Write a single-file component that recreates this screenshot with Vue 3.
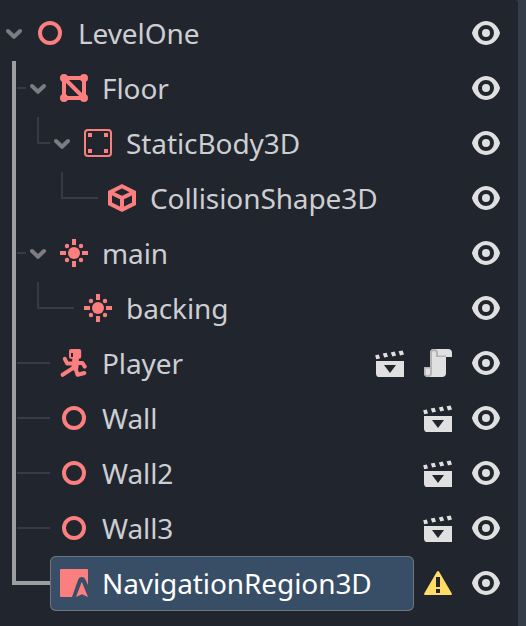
<script setup>
const rows = [
  { name: 'LevelOne', icon: 'node', gutter: 2, open: true, tools: ['eye'] },
  { name: 'Floor', icon: 'mesh', gutter: 26, open: true, rail: true, guide: 'M17 27H26', tools: ['eye'] },
  { name: 'StaticBody3D', icon: 'body', gutter: 50, open: true, rail: true, guide: 'M38 1V27H50', tools: ['eye'] },
  { name: 'CollisionShape3D', icon: 'shape', gutter: 98, rail: true, guide: 'M62 1V27H98', tools: ['eye'] },
  { name: 'main', icon: 'light', gutter: 26, open: true, rail: true, guide: 'M17 27H26', tools: ['eye'] },
  { name: 'backing', icon: 'light', gutter: 74, rail: true, guide: 'M38 1V27H74', tools: ['eye'] },
  { name: 'Player', icon: 'player', gutter: 50, rail: true, guide: 'M17 27H50', tools: ['scene', 'script', 'eye'] },
  { name: 'Wall', icon: 'node', gutter: 50, rail: true, guide: 'M17 27H50', tools: ['scene', 'eye'] },
  { name: 'Wall2', icon: 'node', gutter: 50, rail: true, guide: 'M17 27H50', tools: ['scene', 'eye'] },
  { name: 'Wall3', icon: 'node', gutter: 50, rail: true, guide: 'M17 27H50', tools: ['scene', 'eye'] },
  { name: 'NavigationRegion3D', icon: 'nav', gutter: 50, rail: true, selected: true, tools: ['warning', 'eye'] },
]
</script>

<template>
  <div class="dock">
    <ul class="tree">
      <li v-for="row in rows" :key="row.name" class="row">
        <svg class="gutter" :width="row.gutter" height="55">
          <path v-if="row.rail && row.selected" class="rail" d="M14 0V27H50" />
          <path v-else-if="row.rail" class="rail" d="M14 0V55" />
          <path v-if="row.guide" class="guide" :d="row.guide" />
        </svg>
        <svg v-if="row.open" class="chevron" viewBox="0 0 24 24">
          <path d="M6 10L12 15.8L18 10" />
        </svg>
        <div class="item" :class="{ selected: row.selected }">
          <svg class="icon" viewBox="0 0 16 16">
            <circle v-if="row.icon === 'node'" class="line" cx="8" cy="8" r="5" />
            <g v-else-if="row.icon === 'mesh'">
              <path class="line" d="M3 3H13V13H3ZL13 13" />
              <circle cx="3" cy="3" r="2" />
              <circle cx="13" cy="3" r="2" />
              <circle cx="3" cy="13" r="2" />
              <circle cx="13" cy="13" r="2" />
            </g>
            <g v-else-if="row.icon === 'body'">
              <rect class="line thin" x="1.5" y="1.5" width="13" height="13" rx="1.5" />
              <path d="M3 3h2v2H3zM11 3h2v2h-2zM3 11h2v2H3zM11 11h2v2h-2z" />
            </g>
            <path
              v-else-if="row.icon === 'shape'"
              class="line"
              d="M8 2.1L14 5.1V10.9L8 13.9L2 10.9V5.1ZM2 5.1L8 8L14 5.1M8 8V13.9"
            />
            <g v-else-if="row.icon === 'light'">
              <circle cx="8" cy="8" r="3" />
              <path d="M7 1h2v3H7zM7 12h2v3H7zM1 7h3v2H1zM12 7h3v2h-3z" />
              <circle cx="4.5" cy="4.5" r="1.1" />
              <circle cx="11.5" cy="4.5" r="1.1" />
              <circle cx="4.5" cy="11.5" r="1.1" />
              <circle cx="11.5" cy="11.5" r="1.1" />
            </g>
            <g v-else-if="row.icon === 'player'">
              <path
                fill-rule="evenodd"
                d="M6.5 1h4.1a1 1 0 0 1 1 1v2.9a1 1 0 0 1-1 1H6.5a1 1 0 0 1-1-1V2a1 1 0 0 1 1-1zM6.5 3v2h1V3z"
              />
              <path d="M7.2 5.5h3.2v3.2L9.9 12H8L6.8 10.2z" />
              <path class="limb" d="M3.4 5.9L4.6 8.3H8" />
              <path class="limb" d="M9.5 8H12.2L13.4 9.8" />
              <path class="limb" d="M2.3 13.9L8 10.2" />
              <path class="limb" d="M8.8 10.8L9.8 13.9L13.2 13" />
            </g>
            <g v-else>
              <path
                d="M1.5 1h13a.5.5 0 0 1 .5.5V9L13.7 6.2Q13.2 5 11.9 5Q10.6 5 10.1 6.2L7 15H1.5a.5.5 0 0 1-.5-.5v-13a.5.5 0 0 1 .5-.5z"
              />
              <path d="M11.9 7.4L15 15L12 13.6L9 15z" />
            </g>
          </svg>
          <span class="name">{{ row.name }}</span>
        </div>
        <div class="tools">
          <svg v-for="tool in row.tools" :key="tool" class="icon" :class="tool" viewBox="0 0 16 16">
            <path
              v-if="tool === 'eye'"
              fill-rule="evenodd"
              d="M8 2C5.443 2 2.209 3.948 1.045 7.705a1 1 0 0 0-.004.568C2.178 12.209 5.526 14 8 14s5.822-1.791 6.959-5.727a1 1 0 0 0 0-.547C13.825 3.896 10.557 2 8 2zM8 4a4 4 0 0 1 0 8a4 4 0 0 1 0-8zM8 6a2 2 0 0 0 0 4a2 2 0 0 0 0-4z"
            />
            <g v-else-if="tool === 'scene'">
              <path fill-rule="evenodd" d="M1 7h14v8H2.8A1.8 1.8 0 0 1 1 13.2zM5 9l3 4 3-4z" />
              <path
                d="M.6 4.1L2.4 3.7L3 5.7L1.1 6.1zM4.4 3.3L6.3 2.9L7 4.9L5.1 5.3zM8.4 2.7L10.3 2.3L11.1 4.3L9.2 4.7zM12.3 2.1L14.3 1.8L15 3.8L13 4.2z"
              />
            </g>
            <g v-else-if="tool === 'script'">
              <path d="M6 1h7a2 2 0 0 1 2 2v2h-3v8a2 2 0 0 1-2 2H3a2 2 0 0 1-2-2v-3h3V3a2 2 0 0 1 2-2z" />
              <path
                class="fold"
                fill-rule="evenodd"
                d="M6 1a2 2 0 0 0-2 2v7H1v3a2 2 0 0 0 4 0V3a1 1 0 0 1 2 0v2h5V4.2H8V3a2 2 0 0 0-2-2zM1.8 10.8H4V13a1.1 1.1 0 0 1-2.2 0z"
              />
            </g>
            <path
              v-else
              fill-rule="evenodd"
              d="M8 2a.6.6 0 0 0-.5.3L1.1 13.2a.55.55 0 0 0 .5.8h12.8a.55.55 0 0 0 .5-.8L8.5 2.3A.6.6 0 0 0 8 2zM7 5h2v5H7zM7 11h2v2H7z"
            />
          </svg>
        </div>
      </li>
    </ul>
  </div>
</template>

<style>
body {
  margin: 0;
  background: #363d4a;
}
</style>

<style scoped>
.dock {
  box-sizing: border-box;
  height: 626px;
  padding-right: 8px;
  background: #363d4a;
  overflow: hidden;
}
.tree {
  box-sizing: border-box;
  height: 626px;
  margin: 0;
  padding: 6px 0 0;
  list-style: none;
  background: #21252e;
  border-top-right-radius: 3px;
}
.row {
  display: flex;
  align-items: center;
  height: 55px;
}
svg {
  display: block;
  flex: none;
}
.rail,
.guide {
  fill: none;
  stroke: #9d9ea2;
  stroke-width: 4;
}
.guide {
  stroke: #373b43;
  stroke-width: 2;
}
.chevron {
  width: 24px;
  height: 24px;
  margin-bottom: 1px;
  fill: none;
  stroke: #7b7d82;
  stroke-width: 4;
  stroke-linecap: round;
  stroke-linejoin: round;
}
.item {
  box-sizing: border-box;
  flex: 1;
  display: flex;
  align-items: center;
  gap: 12px;
  height: 55px;
  padding: 0 7px 1px 8px;
  border-radius: 6px;
}
.item .icon {
  fill: #fc7f7f;
}
.icon {
  width: 32px;
  height: 32px;
}
.item .line {
  fill: none;
  stroke: #fc7f7f;
  stroke-width: 2;
}
.item .thin {
  stroke-width: 1;
}
.limb {
  fill: none;
  stroke: #fc7f7f;
  stroke-width: 2;
  stroke-linecap: round;
  stroke-linejoin: round;
}
.name {
  color: #cdced1;
  font: 28px/38px "Noto Sans", sans-serif;
  letter-spacing: -0.09px;
  white-space: nowrap;
}
.selected {
  background: #384e66;
  box-shadow: inset 0 0 0 1px #6f757e;
}
.selected .name {
  color: #fff;
}
.tools {
  display: flex;
  gap: 16px;
  padding: 0 16px 1px 8px;
  fill: #e0e0e0;
}
.fold {
  fill: #b4b4b4;
}
.warning {
  fill: #ffdd65;
}
</style>
